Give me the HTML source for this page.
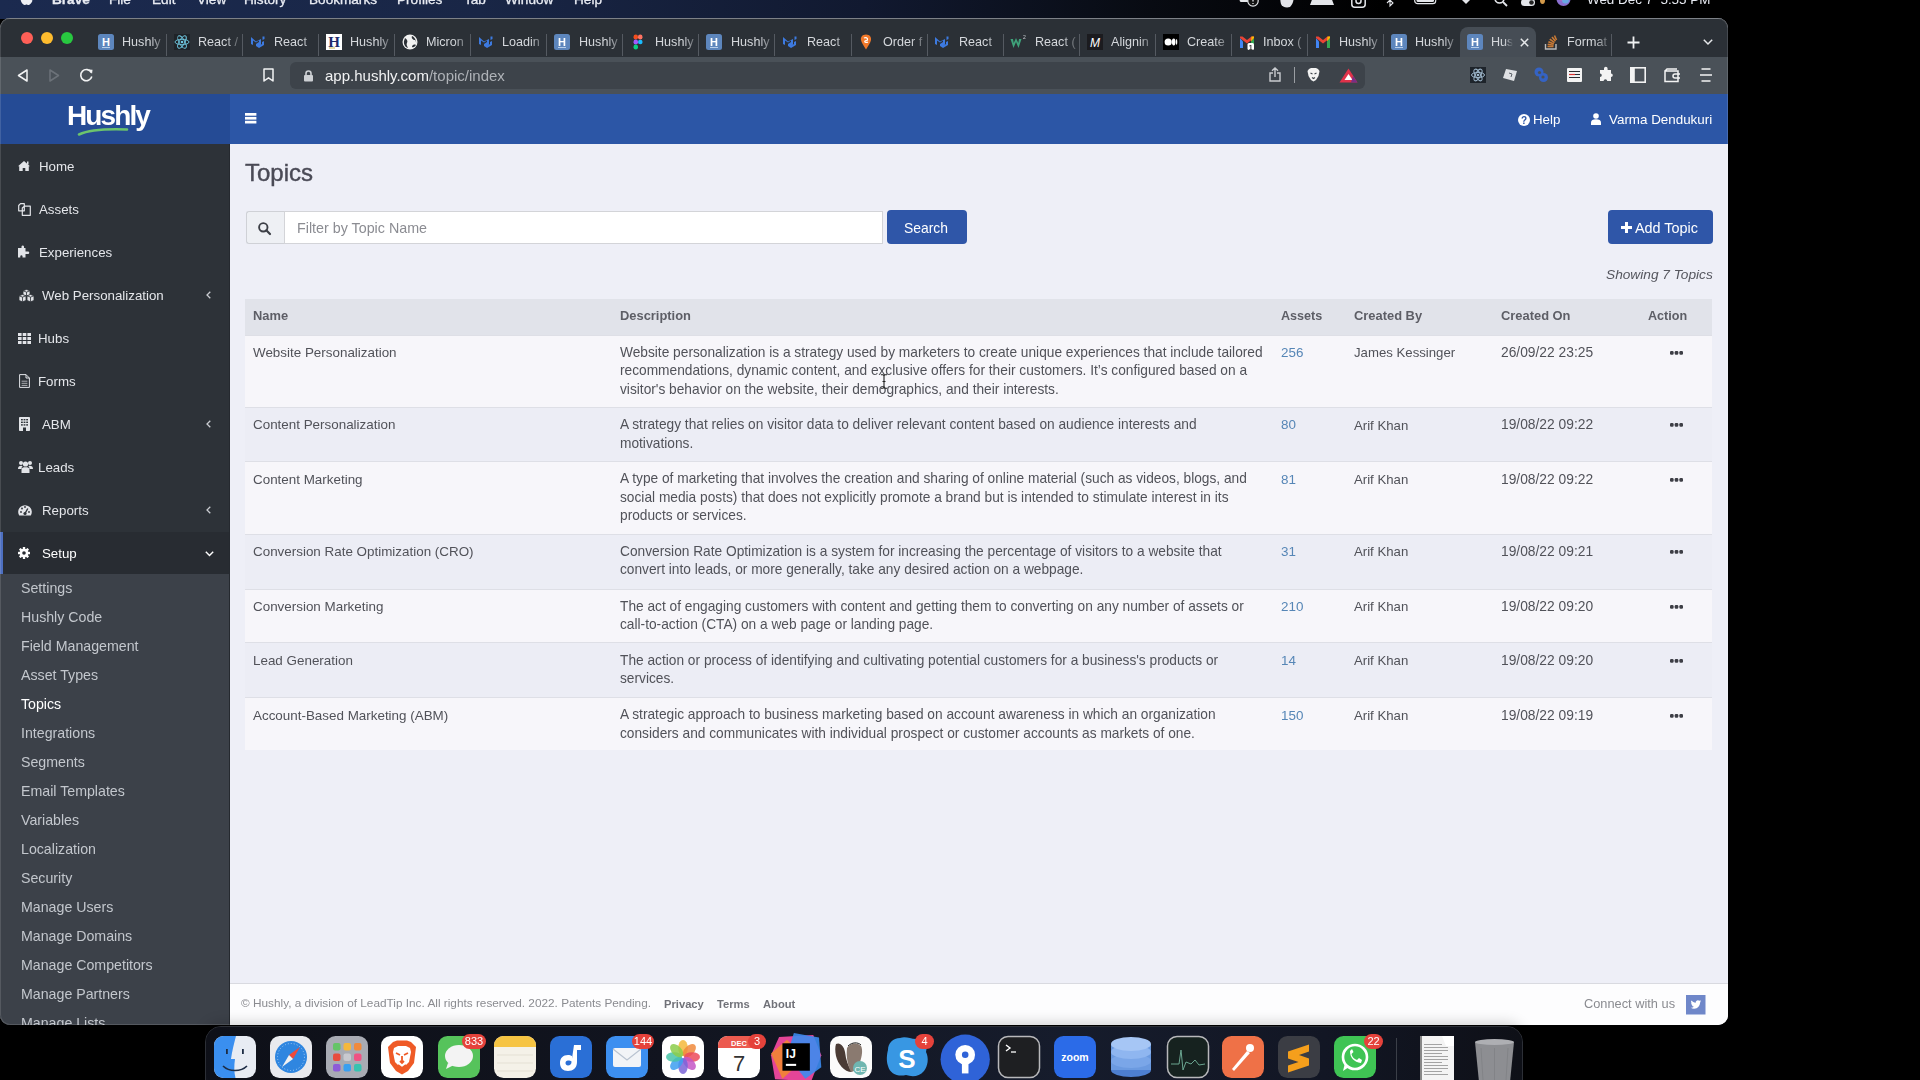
<!DOCTYPE html><html><head><meta charset="utf-8"><title>Topics</title><style>
*{box-sizing:border-box}
html,body{margin:0;padding:0}
body{width:1920px;height:1080px;background:#000;position:relative;overflow:hidden;font-family:"Liberation Sans",sans-serif}
.t{position:absolute;white-space:nowrap;line-height:1;will-change:transform}
.a{position:absolute}
svg{position:absolute;overflow:visible}
</style></head><body>
<div class="a" style="left:0;top:0;width:1920px;height:19px;background:linear-gradient(90deg,#1b2a4f 0%,#192646 25%,#111930 45%,#080b12 60%,#000 72%)"></div>
<div class="t" style="left:52.00px;top:-6.76px;font-size:13.6px;color:#e9ecf3;font-weight:bold;font-style:normal;-webkit-text-stroke:0.3px #e9ecf3">Brave</div>
<div class="t" style="left:109.00px;top:-6.76px;font-size:13.6px;color:#e9ecf3;font-weight:normal;font-style:normal;-webkit-text-stroke:0.3px #e9ecf3">File</div>
<div class="t" style="left:151.50px;top:-6.76px;font-size:13.6px;color:#e9ecf3;font-weight:normal;font-style:normal;-webkit-text-stroke:0.3px #e9ecf3">Edit</div>
<div class="t" style="left:196.50px;top:-6.76px;font-size:13.6px;color:#e9ecf3;font-weight:normal;font-style:normal;-webkit-text-stroke:0.3px #e9ecf3">View</div>
<div class="t" style="left:244.00px;top:-6.76px;font-size:13.6px;color:#e9ecf3;font-weight:normal;font-style:normal;-webkit-text-stroke:0.3px #e9ecf3">History</div>
<div class="t" style="left:309.00px;top:-6.76px;font-size:13.6px;color:#e9ecf3;font-weight:normal;font-style:normal;-webkit-text-stroke:0.3px #e9ecf3">Bookmarks</div>
<div class="t" style="left:397.00px;top:-6.76px;font-size:13.6px;color:#e9ecf3;font-weight:normal;font-style:normal;-webkit-text-stroke:0.3px #e9ecf3">Profiles</div>
<div class="t" style="left:464.00px;top:-6.76px;font-size:13.6px;color:#e9ecf3;font-weight:normal;font-style:normal;-webkit-text-stroke:0.3px #e9ecf3">Tab</div>
<div class="t" style="left:505.00px;top:-6.76px;font-size:13.6px;color:#e9ecf3;font-weight:normal;font-style:normal;-webkit-text-stroke:0.3px #e9ecf3">Window</div>
<div class="t" style="left:574.00px;top:-6.76px;font-size:13.6px;color:#e9ecf3;font-weight:normal;font-style:normal;-webkit-text-stroke:0.3px #e9ecf3">Help</div>
<svg style="left:20px;top:-8px" width="13" height="13" viewBox="0 0 13 13"><path d="M6.5 3 C4 1.5 0.5 2.5 0.5 6.5 C0.5 10 3 13 4.5 13 C5.5 13 5.8 12.5 6.5 12.5 C7.2 12.5 7.5 13 8.5 13 C10 13 12 10.5 12.5 8.5 C10.5 7.5 10.5 4.5 12 3.5 C11 2 9 1.8 6.5 3 Z" fill="#eef0f5"/></svg>
<div class="t" style="left:1587.00px;top:-7.09px;font-size:13.4px;color:#e9ecf3;font-weight:normal;font-style:normal;">Wed Dec 7&nbsp;&nbsp;5:55 PM</div>
<svg style="left:1239px;top:-6px" width="20" height="14" viewBox="0 0 20 14"><path d="M2 8 C0 8 0 3 3 3 C4 0 9 0 10 3 C13 2 14 6 12 8 Z" fill="#e4e6ea"/><circle cx="14" cy="7" r="5.2" fill="#111" stroke="#e4e6ea" stroke-width="1.2"/><path d="M14 4 V7.5 M14 9 V10" stroke="#e4e6ea" stroke-width="1.3"/></svg>
<svg style="left:1279px;top:-6px" width="16" height="14" viewBox="0 0 16 14"><path d="M2 0 H14 C15 4 15 9 11 13 C7 14 3 13 2 10 C1 6 1 3 2 0 Z" fill="#e4e6ea"/><circle cx="10" cy="2" r="2.5" fill="#111"/></svg>
<svg style="left:1310px;top:-8px" width="25" height="14" viewBox="0 0 25 14"><path d="M3 5 L21 5 L24 13 L0 13 Z" fill="#e4e6ea"/><path d="M7 7 L17 7" stroke="#222" stroke-width="1"/></svg>
<svg style="left:1351px;top:-7px" width="15" height="15" viewBox="0 0 15 15"><rect x="0.8" y="0.8" width="13.4" height="13.4" rx="3" fill="none" stroke="#e4e6ea" stroke-width="1.5"/><path d="M5 4 V8 A2.5 2.5 0 0 0 10 8 V4" stroke="#e4e6ea" stroke-width="1.5" fill="none"/></svg>
<svg style="left:1386px;top:-7px" width="9" height="14" viewBox="0 0 9 14"><path d="M1 4 L7 10 L4 13 V1 L7 4 L1 10" stroke="#e4e6ea" stroke-width="1.1" fill="none"/></svg>
<svg style="left:1414px;top:-8px" width="25" height="13" viewBox="0 0 25 13"><rect x="0.7" y="0.7" width="21" height="11" rx="3" fill="none" stroke="#e4e6ea" stroke-width="1.2"/><rect x="2.5" y="2.5" width="17.5" height="7.5" rx="1.5" fill="#e4e6ea"/><rect x="23" y="4" width="1.5" height="4" fill="#e4e6ea"/></svg>
<svg style="left:1460px;top:-8px" width="12" height="12" viewBox="0 0 12 12"><path d="M6 12 L0 6 A8.5 8.5 0 0 1 12 6 Z" fill="#e4e6ea"/></svg>
<svg style="left:1494px;top:-7px" width="14" height="13" viewBox="0 0 14 13"><circle cx="5.5" cy="5.5" r="4.5" fill="none" stroke="#e4e6ea" stroke-width="1.6"/><path d="M9 9 L13 13" stroke="#e4e6ea" stroke-width="1.8"/></svg>
<svg style="left:1521px;top:-1px" width="14" height="7" viewBox="0 0 14 7"><rect x="0" y="0" width="14" height="7" rx="3.5" fill="#e4e6ea"/><circle cx="10.5" cy="3.5" r="2.3" fill="#222"/></svg>
<svg style="left:1540px;top:-4px" width="5" height="8" viewBox="0 0 5 8"><ellipse cx="2.5" cy="4" rx="2.5" ry="4" fill="#d49a4a"/></svg>
<svg style="left:1556px;top:-8px" width="15" height="14" viewBox="0 0 15 14"><circle cx="7.5" cy="7" r="7" fill="#8a6fd0"/><circle cx="5.5" cy="5" r="3.5" fill="#d06fb5" opacity=".8"/><circle cx="9.5" cy="8" r="3.5" fill="#5fb5e8" opacity=".8"/></svg>
<div class="a" id="win" style="left:0;top:18px;width:1728px;height:1007px;border-radius:10px;overflow:hidden;background:#eeeff7">
<div class="a" style="left:0;top:0;width:1728px;height:39px;background:#2b3036;border-top:1px solid #6a6f76"></div>
<div class="a" style="left:20.7px;top:14.3px;width:12px;height:12px;border-radius:50%;background:#fe5f57"></div>
<div class="a" style="left:41.0px;top:14.3px;width:12px;height:12px;border-radius:50%;background:#febc2e"></div>
<div class="a" style="left:61.0px;top:14.3px;width:12px;height:12px;border-radius:50%;background:#28c840"></div>
<svg style="left:97.63px;top:15.8px" width="16" height="16" viewBox="0 0 16 16"><rect x="0" y="0" width="16" height="16" rx="2.5" fill="#5d86bd"/><text x="8" y="11.5" text-anchor="middle" font-family="Liberation Sans" font-weight="bold" font-size="11" fill="#fff">H</text><rect x="4" y="13" width="8" height="0.8" fill="#cfe0f5"/></svg>
<div class="t" style="left:122.13px;top:17.59px;font-size:12.6px;color:#d5d8dc;width:45px;overflow:hidden;-webkit-mask-image:linear-gradient(90deg,#000 62%,rgba(0,0,0,.25) 92%,transparent 100%)">Hushly</div>
<div class="a" style="left:165.90px;top:16px;width:1px;height:22px;background:#555a61"></div>
<svg style="left:173.70px;top:15.8px" width="16" height="16" viewBox="0 0 16 16"><rect width="16" height="16" fill="#1f2328"/><g fill="none" stroke="#6fc7e0" stroke-width="0.9"><ellipse cx="8" cy="8" rx="7" ry="2.7"/><ellipse cx="8" cy="8" rx="7" ry="2.7" transform="rotate(60 8 8)"/><ellipse cx="8" cy="8" rx="7" ry="2.7" transform="rotate(120 8 8)"/></g><circle cx="8" cy="8" r="1.3" fill="#6fc7e0"/></svg>
<div class="t" style="left:198.20px;top:17.59px;font-size:12.6px;color:#d5d8dc;width:45px;overflow:hidden;-webkit-mask-image:linear-gradient(90deg,#000 62%,rgba(0,0,0,.25) 92%,transparent 100%)">React /</div>
<div class="a" style="left:241.97px;top:16px;width:1px;height:22px;background:#555a61"></div>
<svg style="left:249.77px;top:15.8px" width="16" height="16" viewBox="0 0 16 16"><path d="M1 3 L1 10 L3 11 L3 6.5 L6 8.5 L9 6.5 L9 8 L6 10 L6 12 L9 14 L14 11 L14 7 L12 8 L12 10 L9 12 L11 10.5 L11 5 L6 7.5 Z" fill="#3d7ae0"/><path d="M12.5 2.5 L14.5 2.5 L14.5 5 L12.5 6 Z" fill="#3d7ae0"/></svg>
<div class="t" style="left:274.27px;top:17.59px;font-size:12.6px;color:#d5d8dc;width:45px;overflow:hidden;-webkit-mask-image:linear-gradient(90deg,#000 62%,rgba(0,0,0,.25) 92%,transparent 100%)">React </div>
<div class="a" style="left:318.04px;top:16px;width:1px;height:22px;background:#555a61"></div>
<svg style="left:325.84px;top:15.8px" width="16" height="16" viewBox="0 0 16 16"><rect x="0" y="0" width="16" height="16" fill="#fff"/><text x="8" y="13" text-anchor="middle" font-family="Liberation Serif" font-weight="bold" font-size="15" fill="#1f2a6b">H</text><rect x="3" y="13.5" width="6" height="1" fill="#c9b34a"/></svg>
<div class="t" style="left:350.34px;top:17.59px;font-size:12.6px;color:#d5d8dc;width:45px;overflow:hidden;-webkit-mask-image:linear-gradient(90deg,#000 62%,rgba(0,0,0,.25) 92%,transparent 100%)">Hushly</div>
<div class="a" style="left:394.11px;top:16px;width:1px;height:22px;background:#555a61"></div>
<svg style="left:401.91px;top:15.8px" width="16" height="16" viewBox="0 0 16 16"><circle cx="8" cy="8" r="7.5" fill="#f2f2f2"/><path d="M3 4 C5 5 6 7 5 9 C4 10 5 12 6 14 C3 13 1.5 10 2 7 Z M10 2 C9 4 11 6 13 6 C14 7 14.5 9 14 11 C12 10 10 11 10 13 C12 14 13 12 14 11 C15 8 13 3 10 2 Z" fill="#2b3036"/></svg>
<div class="t" style="left:426.41px;top:17.59px;font-size:12.6px;color:#d5d8dc;width:45px;overflow:hidden;-webkit-mask-image:linear-gradient(90deg,#000 62%,rgba(0,0,0,.25) 92%,transparent 100%)">Micron</div>
<div class="a" style="left:470.18px;top:16px;width:1px;height:22px;background:#555a61"></div>
<svg style="left:477.98px;top:15.8px" width="16" height="16" viewBox="0 0 16 16"><path d="M1 3 L1 10 L3 11 L3 6.5 L6 8.5 L9 6.5 L9 8 L6 10 L6 12 L9 14 L14 11 L14 7 L12 8 L12 10 L9 12 L11 10.5 L11 5 L6 7.5 Z" fill="#3d7ae0"/><path d="M12.5 2.5 L14.5 2.5 L14.5 5 L12.5 6 Z" fill="#3d7ae0"/></svg>
<div class="t" style="left:502.48px;top:17.59px;font-size:12.6px;color:#d5d8dc;width:45px;overflow:hidden;-webkit-mask-image:linear-gradient(90deg,#000 62%,rgba(0,0,0,.25) 92%,transparent 100%)">Loadin</div>
<div class="a" style="left:546.25px;top:16px;width:1px;height:22px;background:#555a61"></div>
<svg style="left:554.05px;top:15.8px" width="16" height="16" viewBox="0 0 16 16"><rect x="0" y="0" width="16" height="16" rx="2.5" fill="#5d86bd"/><text x="8" y="11.5" text-anchor="middle" font-family="Liberation Sans" font-weight="bold" font-size="11" fill="#fff">H</text><rect x="4" y="13" width="8" height="0.8" fill="#cfe0f5"/></svg>
<div class="t" style="left:578.55px;top:17.59px;font-size:12.6px;color:#d5d8dc;width:45px;overflow:hidden;-webkit-mask-image:linear-gradient(90deg,#000 62%,rgba(0,0,0,.25) 92%,transparent 100%)">Hushly</div>
<div class="a" style="left:622.32px;top:16px;width:1px;height:22px;background:#555a61"></div>
<svg style="left:630.12px;top:15.8px" width="16" height="16" viewBox="0 0 16 16"><rect x="3.5" y="0.5" width="4.5" height="5" rx="2.2" fill="#f24e1e"/><rect x="8" y="0.5" width="4.5" height="5" rx="2.2" fill="#ff7262"/><rect x="3.5" y="5.5" width="4.5" height="5" rx="2.2" fill="#a259ff"/><circle cx="10.3" cy="8" r="2.3" fill="#1abcfe"/><rect x="3.5" y="10.5" width="4.5" height="5" rx="2.2" fill="#0acf83"/></svg>
<div class="t" style="left:654.62px;top:17.59px;font-size:12.6px;color:#d5d8dc;width:45px;overflow:hidden;-webkit-mask-image:linear-gradient(90deg,#000 62%,rgba(0,0,0,.25) 92%,transparent 100%)">Hushly</div>
<div class="a" style="left:698.39px;top:16px;width:1px;height:22px;background:#555a61"></div>
<svg style="left:706.19px;top:15.8px" width="16" height="16" viewBox="0 0 16 16"><rect x="0" y="0" width="16" height="16" rx="2.5" fill="#5d86bd"/><text x="8" y="11.5" text-anchor="middle" font-family="Liberation Sans" font-weight="bold" font-size="11" fill="#fff">H</text><rect x="4" y="13" width="8" height="0.8" fill="#cfe0f5"/></svg>
<div class="t" style="left:730.69px;top:17.59px;font-size:12.6px;color:#d5d8dc;width:45px;overflow:hidden;-webkit-mask-image:linear-gradient(90deg,#000 62%,rgba(0,0,0,.25) 92%,transparent 100%)">Hushly</div>
<div class="a" style="left:774.46px;top:16px;width:1px;height:22px;background:#555a61"></div>
<svg style="left:782.26px;top:15.8px" width="16" height="16" viewBox="0 0 16 16"><path d="M1 3 L1 10 L3 11 L3 6.5 L6 8.5 L9 6.5 L9 8 L6 10 L6 12 L9 14 L14 11 L14 7 L12 8 L12 10 L9 12 L11 10.5 L11 5 L6 7.5 Z" fill="#3d7ae0"/><path d="M12.5 2.5 L14.5 2.5 L14.5 5 L12.5 6 Z" fill="#3d7ae0"/></svg>
<div class="t" style="left:806.76px;top:17.59px;font-size:12.6px;color:#d5d8dc;width:45px;overflow:hidden;-webkit-mask-image:linear-gradient(90deg,#000 62%,rgba(0,0,0,.25) 92%,transparent 100%)">React</div>
<div class="a" style="left:850.53px;top:16px;width:1px;height:22px;background:#555a61"></div>
<svg style="left:858.33px;top:15.8px" width="16" height="16" viewBox="0 0 16 16"><path d="M8 0.5 C4 0.5 2.5 3.5 3 6 C3.5 9 6 12 8 15.5 C10 12 12.5 9 13 6 C13.5 3.5 12 0.5 8 0.5 Z" fill="#f0782a"/><path d="M6 4 C8 3 10 4 9.5 6 L7 7 C6 8 8 9 10 8" stroke="#fff" stroke-width="1.2" fill="none"/></svg>
<div class="t" style="left:882.83px;top:17.59px;font-size:12.6px;color:#d5d8dc;width:45px;overflow:hidden;-webkit-mask-image:linear-gradient(90deg,#000 62%,rgba(0,0,0,.25) 92%,transparent 100%)">Order f</div>
<div class="a" style="left:926.60px;top:16px;width:1px;height:22px;background:#555a61"></div>
<svg style="left:934.40px;top:15.8px" width="16" height="16" viewBox="0 0 16 16"><path d="M1 3 L1 10 L3 11 L3 6.5 L6 8.5 L9 6.5 L9 8 L6 10 L6 12 L9 14 L14 11 L14 7 L12 8 L12 10 L9 12 L11 10.5 L11 5 L6 7.5 Z" fill="#3d7ae0"/><path d="M12.5 2.5 L14.5 2.5 L14.5 5 L12.5 6 Z" fill="#3d7ae0"/></svg>
<div class="t" style="left:958.90px;top:17.59px;font-size:12.6px;color:#d5d8dc;width:45px;overflow:hidden;-webkit-mask-image:linear-gradient(90deg,#000 62%,rgba(0,0,0,.25) 92%,transparent 100%)">React </div>
<div class="a" style="left:1002.67px;top:16px;width:1px;height:22px;background:#555a61"></div>
<svg style="left:1010.47px;top:15.8px" width="16" height="16" viewBox="0 0 16 16"><path d="M0.5 5 L3.5 14 L6 8 L8.5 14 L11.5 5 L9 5 L8.3 9 L6 4 L3.7 9 L3 5 Z" fill="#3fa27a"/><text x="13" y="5" font-size="5" fill="#cfd3d6" font-family="Liberation Sans">2</text></svg>
<div class="t" style="left:1034.97px;top:17.59px;font-size:12.6px;color:#d5d8dc;width:45px;overflow:hidden;-webkit-mask-image:linear-gradient(90deg,#000 62%,rgba(0,0,0,.25) 92%,transparent 100%)">React (</div>
<div class="a" style="left:1078.74px;top:16px;width:1px;height:22px;background:#555a61"></div>
<svg style="left:1086.54px;top:15.8px" width="16" height="16" viewBox="0 0 16 16"><rect width="16" height="16" fill="#1b1b1f"/><text x="8" y="12.5" text-anchor="middle" font-family="Liberation Sans" font-style="italic" font-size="12" fill="#fff">M</text></svg>
<div class="t" style="left:1111.04px;top:17.59px;font-size:12.6px;color:#d5d8dc;width:45px;overflow:hidden;-webkit-mask-image:linear-gradient(90deg,#000 62%,rgba(0,0,0,.25) 92%,transparent 100%)">Alignin</div>
<div class="a" style="left:1154.81px;top:16px;width:1px;height:22px;background:#555a61"></div>
<svg style="left:1162.61px;top:15.8px" width="16" height="16" viewBox="0 0 16 16"><rect width="16" height="16" fill="#000"/><circle cx="5.2" cy="8" r="3.6" fill="#fff"/><ellipse cx="10.7" cy="8" rx="1.8" ry="3.4" fill="#fff"/><ellipse cx="13.6" cy="8" rx="0.7" ry="3.1" fill="#fff"/></svg>
<div class="t" style="left:1187.11px;top:17.59px;font-size:12.6px;color:#d5d8dc;width:45px;overflow:hidden;-webkit-mask-image:linear-gradient(90deg,#000 62%,rgba(0,0,0,.25) 92%,transparent 100%)">Create</div>
<div class="a" style="left:1230.88px;top:16px;width:1px;height:22px;background:#555a61"></div>
<svg style="left:1238.68px;top:15.8px" width="16" height="16" viewBox="0 0 16 16"><path d="M1 4 L1 14 L4 14 L4 7.5 Z" fill="#4285f4"/><path d="M12 7.5 L12 14 L15 14 L15 4 Z" fill="#34a853"/><path d="M1 4 L8 9.5 L15 4 L15 2.5 L12.5 2.5 L8 6 L3.5 2.5 L1 2.5 Z" fill="#ea4335"/><path d="M12.5 2.5 L15 2.5 L15 4 L12 7.5 Z" fill="#fbbc04"/><rect x="8.5" y="9" width="6.5" height="7" rx="1.5" fill="#fff"/><text x="11.8" y="15.5" text-anchor="middle" font-size="7" font-weight="bold" font-family="Liberation Sans" fill="#333">1</text></svg>
<div class="t" style="left:1263.18px;top:17.59px;font-size:12.6px;color:#d5d8dc;width:45px;overflow:hidden;-webkit-mask-image:linear-gradient(90deg,#000 62%,rgba(0,0,0,.25) 92%,transparent 100%)">Inbox (</div>
<div class="a" style="left:1306.95px;top:16px;width:1px;height:22px;background:#555a61"></div>
<svg style="left:1314.75px;top:15.8px" width="16" height="16" viewBox="0 0 16 16"><path d="M1 4 L1 14 L4 14 L4 7.5 Z" fill="#4285f4"/><path d="M12 7.5 L12 14 L15 14 L15 4 Z" fill="#34a853"/><path d="M1 4 L8 9.5 L15 4 L15 2.5 L12.5 2.5 L8 6 L3.5 2.5 L1 2.5 Z" fill="#ea4335"/><path d="M12.5 2.5 L15 2.5 L15 4 L12 7.5 Z" fill="#fbbc04"/></svg>
<div class="t" style="left:1339.25px;top:17.59px;font-size:12.6px;color:#d5d8dc;width:45px;overflow:hidden;-webkit-mask-image:linear-gradient(90deg,#000 62%,rgba(0,0,0,.25) 92%,transparent 100%)">Hushly</div>
<div class="a" style="left:1383.02px;top:16px;width:1px;height:22px;background:#555a61"></div>
<svg style="left:1390.82px;top:15.8px" width="16" height="16" viewBox="0 0 16 16"><rect x="0" y="0" width="16" height="16" rx="2.5" fill="#5d86bd"/><text x="8" y="11.5" text-anchor="middle" font-family="Liberation Sans" font-weight="bold" font-size="11" fill="#fff">H</text><rect x="4" y="13" width="8" height="0.8" fill="#cfe0f5"/></svg>
<div class="t" style="left:1415.32px;top:17.59px;font-size:12.6px;color:#d5d8dc;width:45px;overflow:hidden;-webkit-mask-image:linear-gradient(90deg,#000 62%,rgba(0,0,0,.25) 92%,transparent 100%)">Hushly</div>
<div class="a" style="left:1459.6px;top:9px;width:76.1px;height:30px;background:#464d55;border-radius:8px 8px 0 0"></div>
<svg style="left:1466.89px;top:15.8px" width="16" height="16" viewBox="0 0 16 16"><rect x="0" y="0" width="16" height="16" rx="2.5" fill="#5d86bd"/><text x="8" y="11.5" text-anchor="middle" font-family="Liberation Sans" font-weight="bold" font-size="11" fill="#fff">H</text><rect x="4" y="13" width="8" height="0.8" fill="#cfe0f5"/></svg>
<div class="t" style="left:1491.39px;top:17.59px;font-size:12.6px;color:#d5d8dc;width:22px;overflow:hidden;-webkit-mask-image:linear-gradient(90deg,#000 62%,rgba(0,0,0,.25) 92%,transparent 100%)">Hus</div>
<svg style="left:1519.5px;top:19.5px" width="9" height="9" viewBox="0 0 9 9"><path d="M0.8 0.8 L8.2 8.2 M8.2 0.8 L0.8 8.2" stroke="#e6e8ea" stroke-width="1.5"/></svg>
<svg style="left:1542.96px;top:15.8px" width="16" height="16" viewBox="0 0 16 16"><path d="M2.5 10 L2.5 15 L13 15 L13 10" stroke="#bcbbbb" stroke-width="1.4" fill="none"/><g stroke="#c97a35" stroke-width="1.6"><path d="M4.5 12.5 H10.5"/><path d="M4.7 10.3 L10.5 11.3"/><path d="M5.4 7.8 L10.8 10.1"/><path d="M6.8 5.2 L11.5 8.7"/><path d="M9 3 L12.5 7.3"/><path d="M11.5 1.5 L13.5 6"/></g></svg>
<div class="t" style="left:1567.46px;top:17.59px;font-size:12.6px;color:#d5d8dc;width:45px;overflow:hidden;-webkit-mask-image:linear-gradient(90deg,#000 62%,rgba(0,0,0,.25) 92%,transparent 100%)">Format</div>
<div class="a" style="left:1611.23px;top:16px;width:1px;height:22px;background:#555a61"></div>
<svg style="left:1627px;top:17.5px" width="13" height="13" viewBox="0 0 13 13"><path d="M6.5 0.5 V12.5 M0.5 6.5 H12.5" stroke="#f0f1f2" stroke-width="1.8"/></svg>
<svg style="left:1703px;top:21px" width="10" height="6" viewBox="0 0 10 6"><path d="M0.8 0.8 L5 5 L9.2 0.8" stroke="#e6e8ea" stroke-width="1.5" fill="none"/></svg>
<div class="a" style="left:0;top:39px;width:1728px;height:37px;background:#4a5158"></div>
<div class="a" style="left:290px;top:43.5px;width:1075px;height:27.5px;background:#3d434a;border-radius:6px"></div>
<svg style="left:17px;top:50.5px" width="11" height="13" viewBox="0 0 11 13"><path d="M10 1 L1.5 6.5 L10 12 Z" stroke="#f2f3f4" stroke-width="1.5" fill="none" stroke-linejoin="round"/></svg>
<svg style="left:48.5px;top:50.5px" width="11" height="13" viewBox="0 0 11 13"><path d="M1 1 L9.5 6.5 L1 12 Z" stroke="#6c7279" stroke-width="1.5" fill="none" stroke-linejoin="round"/></svg>
<svg style="left:79px;top:50px" width="15" height="14" viewBox="0 0 15 14"><path d="M12.3 4.5 A5.6 5.6 0 1 0 12.8 8.5" stroke="#f2f3f4" stroke-width="1.6" fill="none"/><path d="M9.5 1.5 L13.5 1.8 L13 5.8 Z" fill="#f2f3f4"/></svg>
<svg style="left:262.5px;top:50px" width="11" height="14" viewBox="0 0 11 14"><path d="M1 1 H10 V13 L5.5 9.8 L1 13 Z" stroke="#f2f3f4" stroke-width="1.5" fill="none" stroke-linejoin="round"/></svg>
<svg style="left:303.5px;top:51.5px" width="9" height="12" viewBox="0 0 9 12"><path d="M2 5 V3.5 A2.5 2.5 0 0 1 7 3.5 V5" stroke="#cdd0d4" stroke-width="1.6" fill="none"/><rect x="0" y="5" width="9" height="6.5" rx="1" fill="#cdd0d4"/></svg>
<div class="t" style="left:324.50px;top:49.55px;font-size:15px;color:#f1f2f3;font-weight:normal;font-style:normal;">app.hushly.com<span style="color:#aeb2b7">/topic/index</span></div>
<svg style="left:1269px;top:49px" width="12" height="15" viewBox="0 0 12 15"><path d="M4 6 H1 V14 H11 V6 H8 M6 10 V1 M3 3.8 L6 1 L9 3.8" stroke="#c9ccd0" stroke-width="1.4" fill="none"/></svg>
<div class="a" style="left:1294px;top:49px;width:1px;height:16px;background:#9a9ea3"></div>
<svg style="left:1307px;top:50px" width="13" height="14" viewBox="0 0 13 14"><path d="M2 1 L4 0 H9 L11 1 L12.5 3 L11.5 8 L9 12 L6.5 13.5 L4 12 L1.5 8 L0.5 3 Z" fill="#f3f3f3"/><path d="M3.5 5 L5.5 6 M9.5 5 L7.5 6 M5 9.5 L6.5 10.5 L8 9.5" stroke="#3b4148" stroke-width="1.1" fill="none"/></svg>
<svg style="left:1338.5px;top:49.5px" width="19" height="15" viewBox="0 0 19 15"><path d="M9.5 0.5 L18.5 14.5 H0.5 Z" fill="#e0324a"/><path d="M9.5 6 L13.5 12 H5.5 Z" fill="#fff"/><path d="M14 8 L18.5 14.5 H12 Z" fill="#662d91" opacity=".85"/></svg>
<svg style="left:1470px;top:49px" width="16" height="16" viewBox="0 0 16 16"><rect width="16" height="16" fill="#1e242b"/><g fill="none" stroke="#9fb8cc" stroke-width="1"><ellipse cx="8" cy="8" rx="6.5" ry="2.6"/><ellipse cx="8" cy="8" rx="6.5" ry="2.6" transform="rotate(60 8 8)"/><ellipse cx="8" cy="8" rx="6.5" ry="2.6" transform="rotate(120 8 8)"/></g><circle cx="8" cy="8" r="1.3" fill="#9fb8cc"/></svg>
<svg style="left:1502.5px;top:50px" width="15" height="14" viewBox="0 0 15 14"><path d="M3 1 L14 3 L11 13 L0 10 Z" fill="#dfe1e4"/><path d="M6 5 L9 6 L8 9" stroke="#5a6068" stroke-width="1" fill="none"/></svg>
<svg style="left:1534px;top:49px" width="15" height="16" viewBox="0 0 15 16"><circle cx="5" cy="5" r="4.5" fill="#3563c4"/><circle cx="9.5" cy="10.5" r="4.5" fill="#3563c4"/><circle cx="5.5" cy="5.5" r="1.6" fill="#4a5158"/><circle cx="9" cy="10" r="1.6" fill="#4a5158"/></svg>
<svg style="left:1567px;top:50px" width="15" height="14" viewBox="0 0 15 14"><rect width="15" height="14" rx="1" fill="#f3f3f3"/><path d="M2 3.5 H13 M2 6.5 H13 M2 9.5 H13" stroke="#2b2e33" stroke-width="1.2"/><path d="M2 6.5 H8" stroke="#d33" stroke-width="1.2"/></svg>
<svg style="left:1598.5px;top:49px" width="15" height="15" viewBox="0 0 15 15"><path d="M5 1.5 a1.8 1.8 0 0 1 3.6 0 V3 H12 V6.5 a1.8 1.8 0 0 1 0 3.6 V14 H8.2 a1.8 1.8 0 0 0 -3.6 0 H1 V10 a1.8 1.8 0 0 0 0 -3.6 V3 H5 Z" fill="#f3f3f3"/></svg>
<svg style="left:1630px;top:49px" width="16" height="16" viewBox="0 0 16 16"><rect x="0.8" y="0.8" width="14.4" height="14.4" fill="none" stroke="#f3f3f3" stroke-width="1.6"/><rect x="0.8" y="0.8" width="4" height="14.4" fill="#f3f3f3"/></svg>
<svg style="left:1663.5px;top:50px" width="17" height="15" viewBox="0 0 17 15"><path d="M1 3 H14 V13.5 H1 Z M1 3 L3 1 H13" stroke="#f3f3f3" stroke-width="1.5" fill="none"/><path d="M16 6 H11 A2 2 0 0 0 11 10 H16" stroke="#f3f3f3" stroke-width="1.5" fill="none"/></svg>
<svg style="left:1700px;top:50px" width="12" height="14" viewBox="0 0 12 14"><path d="M1.5 1 H10.5 M0 7 H12 M1.5 13 H10.5" stroke="#f3f3f3" stroke-width="1.5"/></svg>
<div class="a" style="left:0;top:76px;width:1728px;height:50px;background:#2c56a6"></div>
<div class="a" style="left:0;top:76px;width:230px;height:50px;background:#254b95"></div>
<div class="t" style="left:66.5px;top:83.90px;font-size:28px;font-weight:bold;color:#fff;letter-spacing:-1.9px">Hushly</div>
<svg style="left:78px;top:109.5px" width="50" height="8" viewBox="0 0 50 8"><path d="M1 6.5 C12 1.5 30 0.8 49 1.5" stroke="#6cc46c" stroke-width="2.6" fill="none" stroke-linecap="round"/></svg>
<svg style="left:244.8px;top:95px" width="11.4" height="10.5" viewBox="0 0 11.4 10.5"><rect x="0" y="0" width="11.4" height="2.7" fill="#fff"/><rect x="0" y="3.9" width="11.4" height="2.7" fill="#fff"/><rect x="0" y="7.8" width="11.4" height="2.7" fill="#fff"/></svg>
<svg style="left:1518px;top:95.5px" width="12" height="12" viewBox="0 0 12 12"><circle cx="6" cy="6" r="6" fill="#fff"/><text x="6" y="9.8" text-anchor="middle" font-size="10" font-weight="bold" font-family="Liberation Sans" fill="#2c56a6">?</text></svg>
<div class="t" style="left:1533.00px;top:95.00px;font-size:13.3px;color:#fff;font-weight:normal;font-style:normal;">Help</div>
<svg style="left:1590.5px;top:95px" width="10" height="12" viewBox="0 0 10 12"><circle cx="5" cy="3" r="2.8" fill="#fff"/><path d="M0 12 V9.5 C0 7 2 6.3 5 6.3 C8 6.3 10 7 10 9.5 V12 Z" fill="#fff"/></svg>
<div class="t" style="left:1609.00px;top:94.91px;font-size:13.4px;color:#fff;font-weight:normal;font-style:normal;">Varma Dendukuri</div>
<div class="a" style="left:0;top:126px;width:230px;height:881px;background:#2d3238"></div>
<div class="a" style="left:0;top:514px;width:230px;height:42px;background:#282c32"></div>
<div class="a" style="left:0;top:514px;width:3px;height:42px;background:#4d6fc0"></div>
<div class="a" style="left:0;top:556px;width:230px;height:451px;background:#3c4149"></div>
<div class="a" style="left:229px;top:126px;width:1px;height:881px;background:#25292f"></div>
<svg style="left:18px;top:142.6px" width="12" height="10" viewBox="0 0 12 10"><path d="M6 0 L12 5.2 L10.8 5.2 L10.8 10 L7.3 10 L7.3 7 L4.7 7 L4.7 10 L1.2 10 L1.2 5.2 L0 5.2 Z" fill="#e2e4e8"/><rect x="9" y="0.5" width="1.5" height="3" fill="#e2e4e8"/></svg>
<div class="t" style="left:38.50px;top:141.79px;font-size:13.3px;color:#e4e6ea;font-weight:normal;font-style:normal;">Home</div>
<svg style="left:18px;top:184.5px" width="13" height="13" viewBox="0 0 13 13"><path d="M0.7 2.5 L2.5 0.7 H6.3 V7.8 H0.7 Z M4.3 5 L6.3 3.2 H12.3 V12.3 H4.3 Z" stroke="#e2e4e8" stroke-width="1.2" fill="#2d3238" stroke-linejoin="round"/></svg>
<div class="t" style="left:38.50px;top:184.79px;font-size:13.3px;color:#e4e6ea;font-weight:normal;font-style:normal;">Assets</div>
<svg style="left:18px;top:227.0px" width="12" height="13" viewBox="0 0 12 13"><path d="M2 3 H3.5 V1.5 A1.3 1.3 0 0 1 6 1.5 V3 H7.5 V6.5 H10 A1.2 1.2 0 0 1 10 9 H7.5 V12.5 H4.5 V11 A1.2 1.2 0 0 0 2.3 11 V12.5 H0 V3 Z" fill="#e2e4e8"/></svg>
<div class="t" style="left:38.50px;top:227.80px;font-size:13.3px;color:#e4e6ea;font-weight:normal;font-style:normal;">Experiences</div>
<svg style="left:17.5px;top:270.5px" width="17" height="14" viewBox="0 0 17 14"><g fill="#e2e4e8" stroke="#2d3238" stroke-width="0.8" stroke-linejoin="round"><path d="M5 1.8 L8.5 0.5 L12 1.8 L12 6 L8.5 7.3 L5 6 Z"/><path d="M1 6.8 L4.5 5.5 L8 6.8 L8 11.5 L4.5 12.8 L1 11.5 Z"/><path d="M9 6.8 L12.5 5.5 L16 6.8 L16 11.5 L12.5 12.8 L9 11.5 Z"/></g><path d="M5 1.8 L8.5 3.1 L12 1.8 M8.5 3.1 V7.3 M1 6.8 L4.5 8.1 L8 6.8 M4.5 8.1 V12.8 M9 6.8 L12.5 8.1 L16 6.8 M12.5 8.1 V12.8" stroke="#2d3238" stroke-width="0.8" fill="none"/></svg>
<div class="t" style="left:42.00px;top:270.80px;font-size:13.3px;color:#e4e6ea;font-weight:normal;font-style:normal;">Web Personalization</div>
<svg style="left:18px;top:314.5px" width="13" height="11" viewBox="0 0 13 11"><g fill="#e2e4e8"><rect x="0" y="0" width="3.6" height="3"/><rect x="4.7" y="0" width="3.6" height="3"/><rect x="9.4" y="0" width="3.6" height="3"/><rect x="0" y="4" width="3.6" height="3"/><rect x="4.7" y="4" width="3.6" height="3"/><rect x="9.4" y="4" width="3.6" height="3"/><rect x="0" y="8" width="3.6" height="3"/><rect x="4.7" y="8" width="3.6" height="3"/><rect x="9.4" y="8" width="3.6" height="3"/></g></svg>
<div class="t" style="left:38.00px;top:313.80px;font-size:13.3px;color:#e4e6ea;font-weight:normal;font-style:normal;">Hubs</div>
<svg style="left:19px;top:355.5px" width="11" height="14" viewBox="0 0 11 14"><path d="M0.6 0.6 H7 L10.4 4 V13.4 H0.6 Z M7 0.6 V4 H10.4" stroke="#e2e4e8" stroke-width="1" fill="none" stroke-linejoin="round"/><path d="M2.6 7.2 H8.4 M2.6 9.3 H8.4 M2.6 11.4 H8.4" stroke="#e2e4e8" stroke-width="0.7"/></svg>
<div class="t" style="left:38.00px;top:356.80px;font-size:13.3px;color:#e4e6ea;font-weight:normal;font-style:normal;">Forms</div>
<svg style="left:19px;top:399.0px" width="11" height="14" viewBox="0 0 11 14"><rect x="0" y="0" width="11" height="14" rx="0.8" fill="#e2e4e8"/><g fill="#2d3238"><rect x="2" y="2" width="1.8" height="1.4"/><rect x="4.6" y="2" width="1.8" height="1.4"/><rect x="7.2" y="2" width="1.8" height="1.4"/><rect x="2" y="4.6" width="1.8" height="1.4"/><rect x="4.6" y="4.6" width="1.8" height="1.4"/><rect x="7.2" y="4.6" width="1.8" height="1.4"/><rect x="2" y="7.2" width="1.8" height="1.4"/><rect x="4.6" y="7.2" width="1.8" height="1.4"/><rect x="7.2" y="7.2" width="1.8" height="1.4"/><rect x="4" y="10.5" width="3" height="3.5"/></g></svg>
<div class="t" style="left:42.00px;top:399.80px;font-size:13.3px;color:#e4e6ea;font-weight:normal;font-style:normal;">ABM</div>
<svg style="left:18px;top:442.0px" width="15" height="13" viewBox="0 0 15 13"><circle cx="3" cy="3" r="2" fill="#e2e4e8"/><circle cx="12" cy="3" r="2" fill="#e2e4e8"/><circle cx="7.5" cy="4" r="2.6" fill="#e2e4e8"/><path d="M0 9 C0 6.5 1.2 5.8 3.3 5.8 C4 5.8 4.5 6 4.6 6.3 C3.6 7.3 3.5 8 3.5 9 Z M15 9 C15 6.5 13.8 5.8 11.7 5.8 C11 5.8 10.5 6 10.4 6.3 C11.4 7.3 11.5 8 11.5 9 Z M3.5 13 V10 C3.5 7.8 5 7.3 7.5 7.3 C10 7.3 11.5 7.8 11.5 10 V13 Z" fill="#e2e4e8"/></svg>
<div class="t" style="left:38.00px;top:442.80px;font-size:13.3px;color:#e4e6ea;font-weight:normal;font-style:normal;">Leads</div>
<svg style="left:18px;top:486.0px" width="14" height="12" viewBox="0 0 14 12"><path d="M1.2 11.5 A6.8 6.8 0 1 1 12.8 11.5 Z" fill="#e2e4e8"/><path d="M7 9.5 L9.8 4.5" stroke="#2d3238" stroke-width="1.4"/><circle cx="7" cy="9.5" r="1.6" fill="#2d3238"/><circle cx="3" cy="8" r="0.9" fill="#2d3238"/><circle cx="4" cy="4.5" r="0.9" fill="#2d3238"/><circle cx="7" cy="3" r="0.9" fill="#2d3238"/><circle cx="11" cy="8" r="0.9" fill="#2d3238"/></svg>
<div class="t" style="left:42.00px;top:485.80px;font-size:13.3px;color:#e4e6ea;font-weight:normal;font-style:normal;">Reports</div>
<svg style="left:18px;top:529.0px" width="12" height="12" viewBox="0 0 12 12"><g fill="#fff"><circle cx="6" cy="6" r="4.3"/><rect x="4.8" y="0" width="2.4" height="12" rx="0.5"/><rect x="4.8" y="0" width="2.4" height="12" rx="0.5" transform="rotate(45 6 6)"/><rect x="4.8" y="0" width="2.4" height="12" rx="0.5" transform="rotate(90 6 6)"/><rect x="4.8" y="0" width="2.4" height="12" rx="0.5" transform="rotate(135 6 6)"/></g><circle cx="6" cy="6" r="1.8" fill="#282c32"/></svg>
<div class="t" style="left:41.50px;top:528.80px;font-size:13.3px;color:#ffffff;font-weight:normal;font-style:normal;">Setup</div>
<svg style="left:206px;top:273.1px" width="5" height="8" viewBox="0 0 5 8"><path d="M4.3 0.7 L1 4 L4.3 7.3" stroke="#c8cbd0" stroke-width="1.3" fill="none"/></svg>
<svg style="left:206px;top:402.1px" width="5" height="8" viewBox="0 0 5 8"><path d="M4.3 0.7 L1 4 L4.3 7.3" stroke="#c8cbd0" stroke-width="1.3" fill="none"/></svg>
<svg style="left:206px;top:488.1px" width="5" height="8" viewBox="0 0 5 8"><path d="M4.3 0.7 L1 4 L4.3 7.3" stroke="#c8cbd0" stroke-width="1.3" fill="none"/></svg>
<svg style="left:204.5px;top:533.0px" width="9" height="6" viewBox="0 0 9 6"><path d="M0.8 0.8 L4.5 4.6 L8.2 0.8" stroke="#fff" stroke-width="1.4" fill="none"/></svg>
<div class="t" style="left:21.00px;top:563.13px;font-size:14.2px;color:#c3c7cd;font-weight:normal;font-style:normal;">Settings</div>
<div class="t" style="left:21.00px;top:592.13px;font-size:14.2px;color:#c3c7cd;font-weight:normal;font-style:normal;">Hushly Code</div>
<div class="t" style="left:21.00px;top:621.13px;font-size:14.2px;color:#c3c7cd;font-weight:normal;font-style:normal;">Field Management</div>
<div class="t" style="left:21.00px;top:650.13px;font-size:14.2px;color:#c3c7cd;font-weight:normal;font-style:normal;">Asset Types</div>
<div class="t" style="left:21.00px;top:679.13px;font-size:14.2px;color:#ffffff;font-weight:normal;font-style:normal;">Topics</div>
<div class="t" style="left:21.00px;top:708.13px;font-size:14.2px;color:#c3c7cd;font-weight:normal;font-style:normal;">Integrations</div>
<div class="t" style="left:21.00px;top:737.13px;font-size:14.2px;color:#c3c7cd;font-weight:normal;font-style:normal;">Segments</div>
<div class="t" style="left:21.00px;top:766.13px;font-size:14.2px;color:#c3c7cd;font-weight:normal;font-style:normal;">Email Templates</div>
<div class="t" style="left:21.00px;top:795.13px;font-size:14.2px;color:#c3c7cd;font-weight:normal;font-style:normal;">Variables</div>
<div class="t" style="left:21.00px;top:824.13px;font-size:14.2px;color:#c3c7cd;font-weight:normal;font-style:normal;">Localization</div>
<div class="t" style="left:21.00px;top:853.13px;font-size:14.2px;color:#c3c7cd;font-weight:normal;font-style:normal;">Security</div>
<div class="t" style="left:21.00px;top:882.13px;font-size:14.2px;color:#c3c7cd;font-weight:normal;font-style:normal;">Manage Users</div>
<div class="t" style="left:21.00px;top:911.13px;font-size:14.2px;color:#c3c7cd;font-weight:normal;font-style:normal;">Manage Domains</div>
<div class="t" style="left:21.00px;top:940.13px;font-size:14.2px;color:#c3c7cd;font-weight:normal;font-style:normal;">Manage Competitors</div>
<div class="t" style="left:21.00px;top:969.13px;font-size:14.2px;color:#c3c7cd;font-weight:normal;font-style:normal;">Manage Partners</div>
<div class="t" style="left:21.00px;top:998.13px;font-size:14.2px;color:#c3c7cd;font-weight:normal;font-style:normal;">Manage Lists</div>
<div class="a" style="left:230px;top:126px;width:1498px;height:839px;background:#eeeff7"></div>
<div class="t" style="left:244.80px;top:143.00px;font-size:24px;color:#4a4a56;font-weight:normal;font-style:normal;-webkit-text-stroke:0.4px #4a4a56">Topics</div>
<div class="a" style="left:245.5px;top:192.5px;width:39px;height:33.5px;background:#eef0f4;border:1px solid #cfd1d6;border-right:none;border-radius:3px 0 0 3px"></div>
<div class="a" style="left:284px;top:192.5px;width:598.5px;height:33.5px;background:#fff;border:1px solid #d3d4d8;border-radius:0"></div>
<svg style="left:258px;top:204px" width="13" height="13" viewBox="0 0 13 13"><circle cx="5.3" cy="5.3" r="4.2" stroke="#3c3f46" stroke-width="1.9" fill="none"/><path d="M8.3 8.3 L12 12" stroke="#3c3f46" stroke-width="2.2" stroke-linecap="round"/></svg>
<div class="t" style="left:296.50px;top:203.34px;font-size:14.3px;color:#8b8c92;font-weight:normal;font-style:normal;">Filter by Topic Name</div>
<div class="a" style="left:886.5px;top:192.3px;width:80px;height:33.7px;background:#2f56a8;border-radius:4px"></div>
<div class="t" style="left:904.30px;top:203.69px;font-size:13.9px;color:#fff;font-weight:normal;font-style:normal;">Search</div>
<div class="a" style="left:1608px;top:192.4px;width:104.7px;height:33.7px;background:#2f56a8;border-radius:4px"></div>
<svg style="left:1620.5px;top:203.5px" width="11" height="11" viewBox="0 0 11 11"><path d="M5.5 0 V11 M0 5.5 H11" stroke="#fff" stroke-width="3"/></svg>
<div class="t" style="left:1635.00px;top:202.96px;font-size:14.4px;color:#fff;font-weight:normal;font-style:normal;">Add Topic</div>
<div class="t" style="right:15.7px;top:249.66px;font-size:13.7px;color:#55565e;font-style:italic">Showing 7 Topics</div>
<div class="a" style="left:245px;top:281.2px;width:1467.3px;height:35.5px;background:#e1e3ea"></div>
<div class="t" style="left:253.00px;top:291.74px;font-size:12.9px;color:#5d5e66;font-weight:bold;font-style:normal;">Name</div>
<div class="t" style="left:620.00px;top:291.74px;font-size:12.9px;color:#5d5e66;font-weight:bold;font-style:normal;">Description</div>
<div class="t" style="left:1281.20px;top:291.99px;font-size:12.6px;color:#5d5e66;font-weight:bold;font-style:normal;">Assets</div>
<div class="t" style="left:1354.40px;top:291.74px;font-size:12.9px;color:#5d5e66;font-weight:bold;font-style:normal;">Created By</div>
<div class="t" style="left:1500.80px;top:291.74px;font-size:12.9px;color:#5d5e66;font-weight:bold;font-style:normal;">Created On</div>
<div class="t" style="left:1648.00px;top:291.99px;font-size:12.6px;color:#5d5e66;font-weight:bold;font-style:normal;">Action</div>
<div class="a" style="left:245px;top:316.7px;width:1467.3px;height:72.3px;background:#f7f6fa;border-top:1px solid #dedfe6"></div>
<div class="t" style="left:253.00px;top:328.09px;font-size:13.42px;color:#515259;font-weight:normal;font-style:normal;">Website Personalization</div>
<div class="t" style="left:620.00px;top:327.84px;font-size:13.72px;color:#515259;font-weight:normal;font-style:normal;">Website personalization is a strategy used by marketers to create unique experiences that include tailored</div>
<div class="t" style="left:620.00px;top:346.34px;font-size:13.72px;color:#515259;font-weight:normal;font-style:normal;">recommendations, dynamic content, and exclusive offers for their customers. It&rsquo;s configured based on a</div>
<div class="t" style="left:620.00px;top:364.84px;font-size:13.72px;color:#515259;font-weight:normal;font-style:normal;">visitor's behavior on the website, their demographics, and their interests.</div>
<div class="t" style="left:1281.20px;top:328.09px;font-size:13.42px;color:#5686b6;font-weight:normal;font-style:normal;">256</div>
<div class="t" style="left:1354.40px;top:328.28px;font-size:13.2px;color:#515259;font-weight:normal;font-style:normal;">James Kessinger</div>
<div class="t" style="left:1500.80px;top:328.17px;font-size:13.8px;color:#515259;font-weight:normal;font-style:normal;">26/09/22 23:25</div>
<svg style="left:1669.5px;top:333.0px" width="13" height="4" viewBox="0 0 13 4"><rect x="0" y="0" width="3.6" height="3.8" rx="1.2" fill="#3d3e45"/><rect x="4.7" y="0" width="3.6" height="3.8" rx="1.2" fill="#3d3e45"/><rect x="9.4" y="0" width="3.6" height="3.8" rx="1.2" fill="#3d3e45"/></svg>
<div class="a" style="left:245px;top:389.0px;width:1467.3px;height:54.3px;background:#ecedf5;border-top:1px solid #dedfe6"></div>
<div class="t" style="left:253.00px;top:400.39px;font-size:13.42px;color:#515259;font-weight:normal;font-style:normal;">Content Personalization</div>
<div class="t" style="left:620.00px;top:400.14px;font-size:13.72px;color:#515259;font-weight:normal;font-style:normal;">A strategy that relies on visitor data to deliver relevant content based on audience interests and</div>
<div class="t" style="left:620.00px;top:418.64px;font-size:13.72px;color:#515259;font-weight:normal;font-style:normal;">motivations.</div>
<div class="t" style="left:1281.20px;top:400.39px;font-size:13.42px;color:#5686b6;font-weight:normal;font-style:normal;">80</div>
<div class="t" style="left:1354.40px;top:400.58px;font-size:13.2px;color:#515259;font-weight:normal;font-style:normal;">Arif Khan</div>
<div class="t" style="left:1500.80px;top:400.47px;font-size:13.8px;color:#515259;font-weight:normal;font-style:normal;">19/08/22 09:22</div>
<svg style="left:1669.5px;top:405.3px" width="13" height="4" viewBox="0 0 13 4"><rect x="0" y="0" width="3.6" height="3.8" rx="1.2" fill="#3d3e45"/><rect x="4.7" y="0" width="3.6" height="3.8" rx="1.2" fill="#3d3e45"/><rect x="9.4" y="0" width="3.6" height="3.8" rx="1.2" fill="#3d3e45"/></svg>
<div class="a" style="left:245px;top:443.3px;width:1467.3px;height:72.3px;background:#f7f6fa;border-top:1px solid #dedfe6"></div>
<div class="t" style="left:253.00px;top:454.69px;font-size:13.42px;color:#515259;font-weight:normal;font-style:normal;">Content Marketing</div>
<div class="t" style="left:620.00px;top:454.44px;font-size:13.72px;color:#515259;font-weight:normal;font-style:normal;">A type of marketing that involves the creation and sharing of online material (such as videos, blogs, and</div>
<div class="t" style="left:620.00px;top:472.94px;font-size:13.72px;color:#515259;font-weight:normal;font-style:normal;">social media posts) that does not explicitly promote a brand but is intended to stimulate interest in its</div>
<div class="t" style="left:620.00px;top:491.44px;font-size:13.72px;color:#515259;font-weight:normal;font-style:normal;">products or services.</div>
<div class="t" style="left:1281.20px;top:454.69px;font-size:13.42px;color:#5686b6;font-weight:normal;font-style:normal;">81</div>
<div class="t" style="left:1354.40px;top:454.88px;font-size:13.2px;color:#515259;font-weight:normal;font-style:normal;">Arif Khan</div>
<div class="t" style="left:1500.80px;top:454.77px;font-size:13.8px;color:#515259;font-weight:normal;font-style:normal;">19/08/22 09:22</div>
<svg style="left:1669.5px;top:459.6px" width="13" height="4" viewBox="0 0 13 4"><rect x="0" y="0" width="3.6" height="3.8" rx="1.2" fill="#3d3e45"/><rect x="4.7" y="0" width="3.6" height="3.8" rx="1.2" fill="#3d3e45"/><rect x="9.4" y="0" width="3.6" height="3.8" rx="1.2" fill="#3d3e45"/></svg>
<div class="a" style="left:245px;top:515.6px;width:1467.3px;height:55.1px;background:#ecedf5;border-top:1px solid #dedfe6"></div>
<div class="t" style="left:253.00px;top:526.99px;font-size:13.42px;color:#515259;font-weight:normal;font-style:normal;">Conversion Rate Optimization (CRO)</div>
<div class="t" style="left:620.00px;top:526.74px;font-size:13.72px;color:#515259;font-weight:normal;font-style:normal;">Conversion Rate Optimization is a system for increasing the percentage of visitors to a website that</div>
<div class="t" style="left:620.00px;top:545.24px;font-size:13.72px;color:#515259;font-weight:normal;font-style:normal;">convert into leads, or more generally, take any desired action on a webpage.</div>
<div class="t" style="left:1281.20px;top:526.99px;font-size:13.42px;color:#5686b6;font-weight:normal;font-style:normal;">31</div>
<div class="t" style="left:1354.40px;top:527.18px;font-size:13.2px;color:#515259;font-weight:normal;font-style:normal;">Arif Khan</div>
<div class="t" style="left:1500.80px;top:527.07px;font-size:13.8px;color:#515259;font-weight:normal;font-style:normal;">19/08/22 09:21</div>
<svg style="left:1669.5px;top:531.9px" width="13" height="4" viewBox="0 0 13 4"><rect x="0" y="0" width="3.6" height="3.8" rx="1.2" fill="#3d3e45"/><rect x="4.7" y="0" width="3.6" height="3.8" rx="1.2" fill="#3d3e45"/><rect x="9.4" y="0" width="3.6" height="3.8" rx="1.2" fill="#3d3e45"/></svg>
<div class="a" style="left:245px;top:570.7px;width:1467.3px;height:53.7px;background:#f7f6fa;border-top:1px solid #dedfe6"></div>
<div class="t" style="left:253.00px;top:582.09px;font-size:13.42px;color:#515259;font-weight:normal;font-style:normal;">Conversion Marketing</div>
<div class="t" style="left:620.00px;top:581.84px;font-size:13.72px;color:#515259;font-weight:normal;font-style:normal;">The act of engaging customers with content and getting them to converting on any number of assets or</div>
<div class="t" style="left:620.00px;top:600.34px;font-size:13.72px;color:#515259;font-weight:normal;font-style:normal;">call-to-action (CTA) on a web page or landing page.</div>
<div class="t" style="left:1281.20px;top:582.09px;font-size:13.42px;color:#5686b6;font-weight:normal;font-style:normal;">210</div>
<div class="t" style="left:1354.40px;top:582.28px;font-size:13.2px;color:#515259;font-weight:normal;font-style:normal;">Arif Khan</div>
<div class="t" style="left:1500.80px;top:582.17px;font-size:13.8px;color:#515259;font-weight:normal;font-style:normal;">19/08/22 09:20</div>
<svg style="left:1669.5px;top:587.0px" width="13" height="4" viewBox="0 0 13 4"><rect x="0" y="0" width="3.6" height="3.8" rx="1.2" fill="#3d3e45"/><rect x="4.7" y="0" width="3.6" height="3.8" rx="1.2" fill="#3d3e45"/><rect x="9.4" y="0" width="3.6" height="3.8" rx="1.2" fill="#3d3e45"/></svg>
<div class="a" style="left:245px;top:624.4px;width:1467.3px;height:54.8px;background:#ecedf5;border-top:1px solid #dedfe6"></div>
<div class="t" style="left:253.00px;top:635.79px;font-size:13.42px;color:#515259;font-weight:normal;font-style:normal;">Lead Generation</div>
<div class="t" style="left:620.00px;top:635.54px;font-size:13.72px;color:#515259;font-weight:normal;font-style:normal;">The action or process of identifying and cultivating potential customers for a business's products or</div>
<div class="t" style="left:620.00px;top:654.04px;font-size:13.72px;color:#515259;font-weight:normal;font-style:normal;">services.</div>
<div class="t" style="left:1281.20px;top:635.79px;font-size:13.42px;color:#5686b6;font-weight:normal;font-style:normal;">14</div>
<div class="t" style="left:1354.40px;top:635.98px;font-size:13.2px;color:#515259;font-weight:normal;font-style:normal;">Arif Khan</div>
<div class="t" style="left:1500.80px;top:635.87px;font-size:13.8px;color:#515259;font-weight:normal;font-style:normal;">19/08/22 09:20</div>
<svg style="left:1669.5px;top:640.7px" width="13" height="4" viewBox="0 0 13 4"><rect x="0" y="0" width="3.6" height="3.8" rx="1.2" fill="#3d3e45"/><rect x="4.7" y="0" width="3.6" height="3.8" rx="1.2" fill="#3d3e45"/><rect x="9.4" y="0" width="3.6" height="3.8" rx="1.2" fill="#3d3e45"/></svg>
<div class="a" style="left:245px;top:679.2px;width:1467.3px;height:52.8px;background:#f7f6fa;border-top:1px solid #dedfe6"></div>
<div class="t" style="left:253.00px;top:690.59px;font-size:13.42px;color:#515259;font-weight:normal;font-style:normal;">Account-Based Marketing (ABM)</div>
<div class="t" style="left:620.00px;top:690.34px;font-size:13.72px;color:#515259;font-weight:normal;font-style:normal;">A strategic approach to business marketing based on account awareness in which an organization</div>
<div class="t" style="left:620.00px;top:708.84px;font-size:13.72px;color:#515259;font-weight:normal;font-style:normal;">considers and communicates with individual prospect or customer accounts as markets of one.</div>
<div class="t" style="left:1281.20px;top:690.59px;font-size:13.42px;color:#5686b6;font-weight:normal;font-style:normal;">150</div>
<div class="t" style="left:1354.40px;top:690.78px;font-size:13.2px;color:#515259;font-weight:normal;font-style:normal;">Arif Khan</div>
<div class="t" style="left:1500.80px;top:690.67px;font-size:13.8px;color:#515259;font-weight:normal;font-style:normal;">19/08/22 09:19</div>
<svg style="left:1669.5px;top:695.5px" width="13" height="4" viewBox="0 0 13 4"><rect x="0" y="0" width="3.6" height="3.8" rx="1.2" fill="#3d3e45"/><rect x="4.7" y="0" width="3.6" height="3.8" rx="1.2" fill="#3d3e45"/><rect x="9.4" y="0" width="3.6" height="3.8" rx="1.2" fill="#3d3e45"/></svg>
<svg style="left:880px;top:355.5px" width="8" height="15" viewBox="0 0 8 15"><path d="M1 0.7 H3 L4 1.7 L5 0.7 H7 M4 1.7 V13.3 M1 14.3 H3 L4 13.3 L5 14.3 H7 M2.5 7.5 H5.5" stroke="#222" stroke-width="1.1" fill="none"/></svg>
<div class="a" style="left:230px;top:965px;width:1498px;height:42px;background:#fdfdfe;border-top:1px solid #d9dae0"></div>
<div class="t" style="left:240.50px;top:979.77px;font-size:11.8px;color:#8a8b90;font-weight:normal;font-style:normal;">&copy; Hushly, a division of LeadTip Inc. All rights reserved. 2022. Patents Pending.</div>
<div class="t" style="left:664.40px;top:980.78px;font-size:11.2px;color:#707178;font-weight:bold;font-style:normal;">Privacy</div>
<div class="t" style="left:716.80px;top:980.78px;font-size:11.2px;color:#707178;font-weight:bold;font-style:normal;">Terms</div>
<div class="t" style="left:762.50px;top:980.78px;font-size:11.2px;color:#707178;font-weight:bold;font-style:normal;">About</div>
<div class="t" style="left:1584.00px;top:980.12px;font-size:12.8px;color:#8a8b90;font-weight:normal;font-style:normal;">Connect with us</div>
<svg style="left:1686px;top:977px" width="19.5" height="19.5" viewBox="0 0 20 20"><rect width="20" height="20" fill="#6f87c9"/><path d="M15.5 6.3 C15.1 6.5 14.7 6.6 14.2 6.7 C14.7 6.4 15 6 15.2 5.5 C14.8 5.8 14.3 5.9 13.8 6 C13.4 5.6 12.8 5.3 12.2 5.3 C11 5.3 10 6.3 10 7.5 C10 7.7 10 7.8 10.1 8 C8.2 7.9 6.6 7 5.5 5.7 C5.3 6 5.2 6.4 5.2 6.8 C5.2 7.6 5.6 8.2 6.2 8.6 C5.8 8.6 5.5 8.5 5.2 8.3 C5.2 9.4 6 10.3 7 10.5 C6.8 10.6 6.6 10.6 6.4 10.6 C6.3 10.6 6.1 10.6 6 10.6 C6.3 11.5 7.1 12.1 8.1 12.1 C7.3 12.7 6.4 13 5.4 13 C5.2 13 5 13 4.9 13 C5.9 13.6 7 14 8.3 14 C12.2 14 14.4 10.7 14.4 7.9 L14.4 7.6 C14.8 7.3 15.2 6.8 15.5 6.3 Z" fill="#fff"/></svg>
<div class="a" style="left:0;top:0;width:1728px;height:1007px;border-radius:10px;box-shadow:inset 0 0 0 1px rgba(255,255,255,.13)"></div>
</div>
<div class="a" style="left:205px;top:1026px;width:1318px;height:70px;background:#101219;border-radius:16px;border:1px solid #2c2f36;box-shadow:0 -3px 14px rgba(0,0,0,.18)"></div>
<div class="a" style="left:206px;top:1027px;width:1316px;height:60px;border-radius:15px;background:linear-gradient(90deg,#0e1018 0%,#11141f 35%,#161c2c 65%,#121624 85%,#0e1017 100%)"></div>
<svg style="left:214.3px;top:1036px" width="42" height="42" viewBox="0 0 42 42"><rect width="42" height="42" rx="9.5" fill="#e8ecf3"/><path d="M9.5 0 H22 C20 8 18 15 17 23 H21 C20 30 20 36 21.5 42 H9.5 A9.5 9.5 0 0 1 0 32.5 V9.5 A9.5 9.5 0 0 1 9.5 0 Z" fill="#3a8ff0"/><path d="M9 30 C15 36 27 36 33 30" stroke="#1d2c44" stroke-width="1.6" fill="none"/><rect x="12" y="13" width="1.8" height="5" fill="#1d2c44"/><rect x="28" y="13" width="1.8" height="5" fill="#1d2c44"/></svg>
<svg style="left:270.0px;top:1036px" width="42" height="42" viewBox="0 0 42 42"><rect width="42" height="42" rx="9.5" fill="#e9eaee"/><circle cx="21" cy="21" r="16" fill="#2f86e0"/><circle cx="21" cy="21" r="13.5" fill="none" stroke="#bcd9f5" stroke-width="0.8" stroke-dasharray="1 2"/><path d="M30 11 L23 23 L19 19 Z" fill="#f04a3a"/><path d="M12 31 L19 19 L23 23 Z" fill="#f2f2f2"/></svg>
<svg style="left:326.0px;top:1036px" width="42" height="42" viewBox="0 0 42 42"><rect width="42" height="42" rx="9.5" fill="#a8abb3"/><rect x="7.0" y="7.0" width="7.5" height="7.5" rx="2" fill="#64c466"/><rect x="17.5" y="7.0" width="7.5" height="7.5" rx="2" fill="#f5b83d"/><rect x="28.0" y="7.0" width="7.5" height="7.5" rx="2" fill="#f08a3c"/><rect x="7.0" y="17.5" width="7.5" height="7.5" rx="2" fill="#e84c3d"/><rect x="17.5" y="17.5" width="7.5" height="7.5" rx="2" fill="#c9c9cf"/><rect x="28.0" y="17.5" width="7.5" height="7.5" rx="2" fill="#f05283"/><rect x="7.0" y="28.0" width="7.5" height="7.5" rx="2" fill="#8d5bd8"/><rect x="17.5" y="28.0" width="7.5" height="7.5" rx="2" fill="#3aa0f0"/><rect x="28.0" y="28.0" width="7.5" height="7.5" rx="2" fill="#35c3b0"/></svg>
<svg style="left:381.3px;top:1036px" width="42" height="42" viewBox="0 0 42 42"><rect width="42" height="42" rx="9.5" fill="#fff"/><path d="M12 6 L16 4.5 H26 L30 6 L35 11 L33 27 L27 35 L21 38.5 L15 35 L9 27 L7 11 Z" fill="#ef5a26"/><path d="M13 12 L17 10 H25 L29 12 L30 16 L28 26 L23 31 H19 L14 26 L12 16 Z" fill="#fff"/><path d="M15 17 L19 19 M27 17 L23 19 M19 25 L21 27 L23 25 M21 20 V26 M17 29 L21 32 L25 29" stroke="#ef5a26" stroke-width="1.8" fill="none"/></svg>
<svg style="left:437.9px;top:1036px" width="42" height="42" viewBox="0 0 42 42"><rect width="42" height="42" rx="9.5" fill="#56c35b"/><ellipse cx="21" cy="20" rx="14" ry="11" fill="#f3f3f3"/><path d="M10 27 L8 33 L16 29 Z" fill="#f3f3f3"/></svg>
<div class="a" style="left:461.9px;top:1034px;width:24px;height:15px;border-radius:8px;background:#e5423b"></div><div class="t" style="left:461.9px;top:1035.5px;width:24px;text-align:center;font-size:11px;color:#fff">833</div>
<svg style="left:493.6px;top:1036px" width="42" height="42" viewBox="0 0 42 42"><rect width="42" height="42" rx="9.5" fill="#f4f1e8"/><path d="M0 9.5 A9.5 9.5 0 0 1 9.5 0 H32.5 A9.5 9.5 0 0 1 42 9.5 V11 H0 Z" fill="#f6c443"/><path d="M3 19 H39 M3 27 H39 M3 35 H39" stroke="#ddd8cc" stroke-width="0.7"/></svg>
<svg style="left:550.2px;top:1036px" width="42" height="42" viewBox="0 0 42 42"><rect width="42" height="42" rx="9.5" fill="#2a6fd6"/><path d="M24 9 H31 V14 H27 V26 C27 32 23 35 18 35 C13 35 10 32 10 27 C10 22 13 19 18 19 C19.5 19 21 19.5 22 20 V26 C21 24.8 19.5 24.5 18 24.5 C16.5 24.5 15.5 25.5 15.5 27 C15.5 28.5 16.5 29.5 18 29.5 C20 29.5 21.5 28 21.5 26 Z" fill="#fff"/></svg>
<svg style="left:606.0px;top:1036px" width="42" height="42" viewBox="0 0 42 42"><rect width="42" height="42" rx="9.5" fill="#3c8ff0"/><rect x="7" y="12" width="28" height="19" rx="2" fill="#f2f4f7"/><path d="M7 13 L21 24 L35 13" stroke="#b9c3d0" stroke-width="1.2" fill="none"/></svg>
<div class="a" style="left:631.6px;top:1034px;width:22px;height:15px;border-radius:8px;background:#e5423b"></div><div class="t" style="left:631.6px;top:1035.5px;width:22px;text-align:center;font-size:11px;color:#fff">144</div>
<svg style="left:662.0px;top:1036px" width="42" height="42" viewBox="0 0 42 42"><rect width="42" height="42" rx="9.5" fill="#fff"/><ellipse cx="21" cy="12" rx="4.8" ry="8" fill="#f5b93c" opacity=".85" transform="rotate(0 21 21)"/><ellipse cx="21" cy="12" rx="4.8" ry="8" fill="#f08a3c" opacity=".85" transform="rotate(45 21 21)"/><ellipse cx="21" cy="12" rx="4.8" ry="8" fill="#ec4b5a" opacity=".85" transform="rotate(90 21 21)"/><ellipse cx="21" cy="12" rx="4.8" ry="8" fill="#c456c6" opacity=".85" transform="rotate(135 21 21)"/><ellipse cx="21" cy="12" rx="4.8" ry="8" fill="#7a64d8" opacity=".85" transform="rotate(180 21 21)"/><ellipse cx="21" cy="12" rx="4.8" ry="8" fill="#3c9ef0" opacity=".85" transform="rotate(225 21 21)"/><ellipse cx="21" cy="12" rx="4.8" ry="8" fill="#48c4a8" opacity=".85" transform="rotate(270 21 21)"/><ellipse cx="21" cy="12" rx="4.8" ry="8" fill="#8ccc4a" opacity=".85" transform="rotate(315 21 21)"/></svg>
<svg style="left:718.0px;top:1036px" width="42" height="42" viewBox="0 0 42 42"><rect width="42" height="42" rx="9.5" fill="#fff"/><path d="M0 9.5 A9.5 9.5 0 0 1 9.5 0 H32.5 A9.5 9.5 0 0 1 42 9.5 V12 H0 Z" fill="#ec5a4f"/><text x="21" y="9.5" text-anchor="middle" font-family="Liberation Sans" font-weight="bold" font-size="7.5" fill="#fff">DEC</text><text x="21" y="35" text-anchor="middle" font-family="Liberation Sans" font-size="22" fill="#333">7</text></svg>
<div class="a" style="left:747.5px;top:1034px;width:18px;height:15px;border-radius:8px;background:#e5423b"></div><div class="t" style="left:747.5px;top:1035.5px;width:18px;text-align:center;font-size:11px;color:#fff">3</div>
<svg style="left:771.0px;top:1033px" width="48" height="48" viewBox="0 0 42 42"><path d="M6 2 L40 0 L48 20 L38 46 L2 44 L-2 20 Z" fill="#e44598" transform="scale(0.88) translate(2 2)"/><path d="M20 0 L42 4 L44 30 L30 40 L14 20 Z" fill="#3b8bf0" opacity=".9"/><path d="M0 18 L14 6 L30 22 L10 40 Z" fill="#f28a2c" opacity=".85"/><rect x="10" y="9" width="24" height="24" fill="#000"/><text x="13" y="22" font-family="Liberation Sans" font-weight="bold" font-size="10.5" fill="#fff">IJ</text><rect x="13" y="27" width="9" height="1.8" fill="#fff"/></svg>
<svg style="left:830.3px;top:1036px" width="42" height="42" viewBox="0 0 42 42"><rect width="42" height="42" rx="9.5" fill="#fbfbfb"/><path d="M6 8 C10 6 14 10 15 16 C16 24 18 30 22 36 C14 36 8 28 6 20 C5 15 5 11 6 8 Z" fill="#4a3b35"/><path d="M17 12 C20 7 27 6 31 10 C33 14 32 20 30 26 C28 32 24 36 21 36 C18 30 16 22 17 12 Z" fill="#8a7a70"/><path d="M18 10 C22 6 28 6 31 9" stroke="#222" stroke-width="1" fill="none"/><circle cx="30" cy="32" r="7" fill="#6fb6b0"/><text x="30" y="35.5" text-anchor="middle" font-family="Liberation Sans" font-size="8" fill="#fff">CE</text></svg>
<svg style="left:886.3px;top:1036px" width="42" height="42" viewBox="0 0 42 42"><path d="M14 2 C20 0 24 3 30 3 C38 3 42 9 40 16 C43 22 42 30 38 35 C33 41 26 41 20 39 C12 41 4 38 2 30 C0 24 1 18 2 14 C2 7 7 2 14 2 Z" fill="#3897e3"/><text x="21" y="32" text-anchor="middle" font-family="Liberation Sans" font-weight="bold" font-size="26" fill="#fff">S</text></svg>
<div class="a" style="left:915.3px;top:1034px;width:19px;height:15px;border-radius:8px;background:#e5423b"></div><div class="t" style="left:915.3px;top:1035.5px;width:19px;text-align:center;font-size:11px;color:#fff">4</div>
<svg style="left:940.0px;top:1034px" width="46" height="46" viewBox="0 0 42 42"><circle cx="23" cy="23" r="22.5" fill="#2f63d8"/><circle cx="23" cy="19" r="9" fill="#fff"/><circle cx="23" cy="19" r="3" fill="#2f63d8"/><rect x="20" y="24" width="6" height="12" fill="#fff"/></svg>
<svg style="left:998.0px;top:1036px" width="42" height="42" viewBox="0 0 42 42"><rect x="0.5" y="0.5" width="41" height="41" rx="9.5" fill="#1e1f22" stroke="#b8b8bb" stroke-width="1.5"/><path d="M8 9 L12 12 L8 15" stroke="#fff" stroke-width="1.4" fill="none"/><path d="M13 16 H18" stroke="#fff" stroke-width="1.3"/></svg>
<svg style="left:1054.0px;top:1036px" width="42" height="42" viewBox="0 0 42 42"><rect width="42" height="42" rx="9.5" fill="#2b6be8"/><text x="21" y="25" text-anchor="middle" font-family="Liberation Sans" font-weight="bold" font-size="10.5" fill="#fff">zoom</text></svg>
<svg style="left:1110.4px;top:1036px" width="42" height="42" viewBox="0 0 42 42"><ellipse cx="21" cy="34" rx="20" ry="7" fill="#4d7fd0"/><rect x="1" y="8" width="40" height="26" fill="#6b9ae0"/><ellipse cx="21" cy="25" rx="20" ry="7" fill="#7aa6e8"/><ellipse cx="21" cy="16" rx="20" ry="7" fill="#8fb6f0"/><ellipse cx="21" cy="8" rx="20" ry="7" fill="#a6c6f5"/></svg>
<svg style="left:1166.5px;top:1036px" width="42" height="42" viewBox="0 0 42 42"><rect x="0.5" y="0.5" width="41" height="41" rx="9.5" fill="#16221f" stroke="#b8b8bb" stroke-width="1.5"/><path d="M4 28 H12 L14 14 L16 34 L19 26 L24 28 L28 24 L32 29 L38 28" stroke="#6aa590" stroke-width="1" fill="none"/></svg>
<svg style="left:1222.2px;top:1036px" width="42" height="42" viewBox="0 0 42 42"><rect width="42" height="42" rx="9.5" fill="#ef7147"/><circle cx="28" cy="12" r="4" fill="#fff"/><path d="M25 15 L10 33 L12 35 L28 17 Z" fill="#fff"/></svg>
<svg style="left:1278.0px;top:1036px" width="42" height="42" viewBox="0 0 42 42"><rect width="42" height="42" rx="9.5" fill="#3b3d44"/><path d="M10 15.5 L31 8.5 V15.5 L21 19 L31 22.5 V29.5 L10 36.5 V29.5 L20.5 26 L10 22.5 Z" fill="#f59f1c"/></svg>
<svg style="left:1333.6px;top:1036px" width="42" height="42" viewBox="0 0 42 42"><rect width="42" height="42" rx="9.5" fill="#3fc454"/><circle cx="21" cy="21" r="12" fill="none" stroke="#fff" stroke-width="2.6"/><path d="M9 35 L11 27 L15 31 Z" fill="#fff"/><path d="M16 15 C16 22 20 26 27 27 L28 24 L25 22 L23 24 C20 23 18 21 17.5 18 L19.5 16 L18 13 Z" fill="#fff"/></svg>
<div class="a" style="left:1363.5px;top:1034px;width:19px;height:15px;border-radius:8px;background:#e5423b"></div><div class="t" style="left:1363.5px;top:1035.5px;width:19px;text-align:center;font-size:11px;color:#fff">22</div>
<div class="a" style="left:1396px;top:1038px;width:1px;height:42px;background:#3b3f48"></div>
<svg style="left:1420.0px;top:1036px" width="42" height="42" viewBox="0 0 42 42"><rect x="1" y="0" width="33" height="44" fill="#f4f4f4"/><rect x="0" y="0" width="2" height="44" fill="#888"/><rect x="4" y="8" width="18" height="0.9" fill="#9a9a9a"/><rect x="4" y="11" width="24" height="0.9" fill="#9a9a9a"/><rect x="4" y="14" width="24" height="0.9" fill="#9a9a9a"/><rect x="4" y="17" width="18" height="0.9" fill="#9a9a9a"/><rect x="4" y="20" width="24" height="0.9" fill="#9a9a9a"/><rect x="4" y="23" width="24" height="0.9" fill="#9a9a9a"/><rect x="4" y="26" width="18" height="0.9" fill="#9a9a9a"/><rect x="4" y="29" width="24" height="0.9" fill="#9a9a9a"/><rect x="4" y="32" width="24" height="0.9" fill="#9a9a9a"/><rect x="4" y="35" width="18" height="0.9" fill="#9a9a9a"/><rect x="4" y="38" width="24" height="0.9" fill="#9a9a9a"/><path d="M22 0 H34 V10 H26 Z" fill="#fff"/></svg>
<svg style="left:1473.5px;top:1038px" width="42" height="42" viewBox="0 0 42 42"><path d="M1 4 H40 L36 44 H5 Z" fill="#8d8e92"/><ellipse cx="20.5" cy="4" rx="19.5" ry="3" fill="#aeafb3"/><path d="M7 10 L9 42 M20.5 10 V42 M34 10 L32 42" stroke="#7b7c80" stroke-width="0.6"/></svg>
</body></html>
